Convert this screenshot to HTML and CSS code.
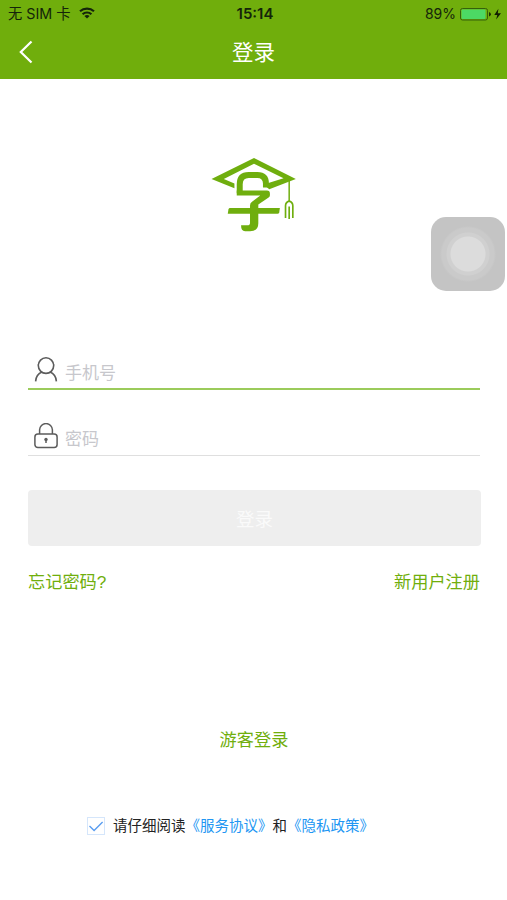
FILE: index.html
```html
<!DOCTYPE html>
<html lang="zh-CN">
<head>
    <meta charset="UTF-8">
    <meta name="viewport" content="width=device-width, initial-scale=1.0">
    <title>登录</title>
    <link rel="stylesheet" href="styles.css">
</head>
<body>
    <header class="header">
        <div class="status-bar">
            <div class="status-left">
                <span>无 SIM 卡</span>
                <svg class="wifi" viewBox="0 0 16 12" fill="none" stroke="currentColor" stroke-width="2.2">
                    <path d="M1 4.3a10.5 10.5 0 0 1 14 0"/>
                    <path d="M3.6 7.2a6.5 6.5 0 0 1 8.8 0"/>
                    <path d="M8 11.5L5.4 9.1a3.8 3.8 0 0 1 5.2 0z" fill="currentColor" stroke="none"/>
                </svg>
            </div>
            <div class="status-time">15:14</div>
            <div class="status-right">
                <span>89%</span>
                <svg class="battery" viewBox="0 0 42 14">
                    <rect x="0.5" y="1.5" width="27" height="11.5" rx="2" fill="none" stroke="#35610a"/>
                    <rect x="1.5" y="2.5" width="24" height="9.5" rx="1" fill="#4cd964"/>
                    <path d="M29 5v4.5q2-.6 2-2.2T29 5z" fill="#1b3005"/>
                    <path d="M38.4 1.8L34.3 8h3l-1.2 4.6L41 6.2h-3.2z" fill="#101d02"/>
                </svg>
            </div>
        </div>
        <div class="nav-bar">
            <a class="back" href="#" aria-label="返回">
                <svg viewBox="0 0 14 24" fill="none" stroke="currentColor" stroke-width="2.2">
                    <path d="M12.5 1.5L1.8 12l10.7 10.5"/>
                </svg>
            </a>
            <h1>登录</h1>
        </div>
    </header>

    <main class="container">
        <svg class="logo" viewBox="0 0 258 226" fill="none" stroke="#6fae0e">
            <!-- 学士帽 -->
            <path d="M1 66L129 3L255 66L175 97L158 83L218 64L129 20L38 66L70 80V94z" fill="#6fae0e" stroke="none"/>
            <path d="M86 109V82Q86 54 113 54H139Q165 54 165 80V92" stroke-width="18"/>
            <path d="M77 101H168Q177 101 177 111V115Q177 120 172 123L142 143V156H117V146Q117 139 123 135L148 116H77z" fill="#6fae0e" stroke="none"/>
            <path d="M50 171L52 158Q53 154 57 154H207L205 167Q204 171 200 171z" fill="#6fae0e" stroke="none"/>
            <path d="M117 154H142V200Q142 224 117 224H102Q90 224 90 206H109Q117 206 117 198z" fill="#6fae0e" stroke="none"/>
            <!-- 流苏 -->
            <path d="M235 58V135" stroke-width="4.5"/>
            <path d="M224 184V147Q224 136 235 133Q246 136 246 147V184M235 149V187" stroke-width="5"/>
        </svg>

        <form class="login-form">
            <div class="form-group active">
                <svg class="field-icon" viewBox="0 0 24 26" fill="none" stroke="#5c5c5c" stroke-width="1.6">
                    <ellipse cx="12" cy="8.6" rx="7.7" ry="7.8"/>
                    <path d="M1.6 24.4c.3-4 2.8-7.9 6.5-9.3M22.4 24.4c-.3-4-2.8-7.9-6.5-9.3"/>
                </svg>
                <input type="text" id="phone" placeholder="手机号">
            </div>
            <div class="form-group">
                <svg class="field-icon" viewBox="0 0 24 26" fill="none" stroke="#5c5c5c" stroke-width="1.5">
                    <rect x="0.9" y="11" width="22.2" height="13.5" rx="3"/>
                    <path d="M5.6 11V6.8a6.4 6.2 0 0 1 12.8 0V11"/>
                    <circle cx="12" cy="16.5" r="1.7" fill="#5c5c5c" stroke="none"/>
                    <path d="M12 17v3"/>
                </svg>
                <input type="password" id="password" placeholder="密码">
            </div>
            <button type="button" class="login-btn">登录</button>
        </form>

        <div class="links">
            <a href="#">忘记密码?</a>
            <a href="#">新用户注册</a>
        </div>

        <a class="guest" href="#">游客登录</a>

        <div class="agreement">
            <span class="checkbox">
                <svg viewBox="0 0 16 16" fill="none" stroke="#5a9df0" stroke-width="1.4">
                    <path d="M1.5 8l4.6 4.4L14.6 4"/>
                </svg>
            </span>
            <p>请仔细阅读<a href="#">《服务协议》</a>和<a href="#">《隐私政策》</a></p>
        </div>
    </main>

    <div class="assistive-touch"></div>
</body>
</html>
```

FILE: styles.css
```css
:root {
    --primary-color: #70ae0c;
    --link-color: #2196f3;
    --placeholder-color: #c7c7cc;
}

* {
    box-sizing: border-box;
}

body {
    margin: 0;
    height: 900px;
    overflow: hidden;
    background-color: #fff;
    font-family: "Liberation Sans", "Noto Sans CJK SC", sans-serif;
}

a {
    color: var(--primary-color);
    text-decoration: none;
}

svg {
    display: block;
}

.header {
    height: 79px;
    background-color: var(--primary-color);
}

.status-bar {
    display: grid;
    grid-template-columns: 1fr auto 1fr;
    align-items: center;
    height: 27px;
    padding: 0 5px 0 8px;
    font-family: Inter, "Noto Sans CJK SC", sans-serif;
    font-size: 14px;
    color: #14240a;
}

.status-left,
.status-right {
    display: flex;
    align-items: center;
}

.status-left {
    gap: 8px;
    margin-top: -2px;
    font-size: 14.3px;
}

.status-right {
    justify-content: flex-end;
    gap: 4px;
}

.wifi {
    width: 16px;
    height: 12px;
}

.status-time {
    font-weight: 600;
    font-size: 15px;
}

.battery {
    width: 42px;
    height: 14px;
}

.nav-bar {
    display: grid;
    grid-template-columns: 60px 1fr 60px;
    align-items: center;
    height: 50px;
    color: #fff;
}

.back {
    padding-left: 19px;
    color: #fff;
}

.back svg {
    width: 14px;
    height: 24px;
}

.nav-bar h1 {
    margin: -3px 0 0;
    text-align: center;
    font-size: 21.5px;
    font-weight: 400;
}

.container {
    display: flex;
    flex-direction: column;
    padding: 78px 27px 0 28px;
}

.logo {
    width: 86px;
    height: 75px;
    margin-left: 183px;
}

.login-form {
    padding-top: 117px;
}

.form-group {
    display: flex;
    align-items: center;
    height: 41px;
    margin-bottom: 25px;
    padding-left: 6px;
    border-bottom: 1px solid #dfdfdf;
}

.form-group.active {
    border-bottom: 2px solid #9bcb5b;
}

.field-icon {
    width: 24px;
    height: 26px;
    margin-top: 2px;
}

input {
    flex: 1;
    min-width: 0;
    height: 30px;
    margin-top: 10px;
    padding: 0 0 0 7px;
    border: none;
    outline: none;
    background: none;
    font-family: inherit;
    font-size: 17px;
}

input::placeholder {
    color: var(--placeholder-color);
}

.login-btn {
    display: block;
    width: 453px;
    height: 56px;
    margin-top: 34px;
    border: none;
    border-radius: 4px;
    background-color: #eee;
    color: #fafafa;
    font-family: inherit;
    font-size: 18.5px;
}

.links {
    display: flex;
    justify-content: space-between;
    margin-top: 23px;
    font-size: 17.2px;
    line-height: 26px;
}

.guest {
    align-self: center;
    margin-top: 132px;
    font-size: 17.2px;
    line-height: 26px;
}

.agreement {
    display: flex;
    align-items: center;
    gap: 8px;
    margin-top: 62px;
    padding-left: 59px;
}

.checkbox {
    width: 18px;
    height: 18px;
    border: 1px solid #d5e6fb;
}

.agreement p {
    margin: 0;
    font-size: 14.5px;
    line-height: 22px;
    color: #222;
    white-space: nowrap;
}

.agreement a {
    color: var(--link-color);
}

/* 悬浮按钮 */
.assistive-touch {
    position: absolute;
    top: 217px;
    right: 2px;
    width: 74px;
    height: 74px;
    border-radius: 15px;
    background: radial-gradient(circle, #dcdcdc 0 17px, #d0d0d0 18px 21px, #cacaca 22px 26px, #c4c4c4 28px);
}
```
